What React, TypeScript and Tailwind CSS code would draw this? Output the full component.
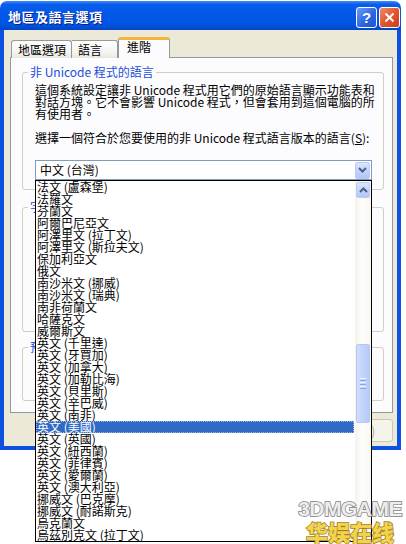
import React from "react";

const items = [
  "法文 (盧森堡)",
  "法羅文",
  "芬蘭文",
  "阿爾巴尼亞文",
  "阿澤里文 (拉丁文)",
  "阿澤里文 (斯拉夫文)",
  "保加利亞文",
  "俄文",
  "南沙米文 (挪威)",
  "南沙米文 (瑞典)",
  "南非荷蘭文",
  "哈薩克文",
  "威爾斯文",
  "英文 (千里達)",
  "英文 (牙買加)",
  "英文 (加拿大)",
  "英文 (加勒比海)",
  "英文 (貝里斯)",
  "英文 (辛巴威)",
  "英文 (南非)",
  "英文 (美國)",
  "英文 (英國)",
  "英文 (紐西蘭)",
  "英文 (菲律賓)",
  "英文 (愛爾蘭)",
  "英文 (澳大利亞)",
  "挪威文 (巴克摩)",
  "挪威文 (耐諾斯克)",
  "烏克蘭文",
  "烏茲別克文 (拉丁文)",
];

function Chevron({ up = false }: { up?: boolean }) {
  return (
    <svg width="9" height="6" viewBox="0 0 9 6">
      <path
        d={up ? "M1 5 L4.5 1.5 L8 5" : "M1 1 L4.5 4.5 L8 1"}
        fill="none"
        stroke="#4D6185"
        strokeWidth="2"
      />
    </svg>
  );
}

export default function App() {
  return (
    <div className="relative w-[406px] h-[544px] bg-white overflow-hidden font-['Noto_Sans_CJK_TC','Noto_Sans_CJK_SC',sans-serif] text-[12px] leading-[12px] text-black">
      <div className="w-[401px] mt-[1px] flex flex-col">
        {/* Title bar */}
        <div className="h-[29px] rounded-t-[7px] bg-[linear-gradient(to_bottom,#3D8BF8_0%,#0A5CEC_12%,#0058E8_45%,#0055E2_80%,#0046C8_100%)] flex items-center pl-[8px] pr-[1px] pt-[3px]">
          <span className="text-white font-bold text-[13px] leading-[14px] [text-shadow:1px_1px_0_#0A1E8C] tracking-[0.5px]">
            地區及語言選項
          </span>
          <div className="ml-auto flex gap-[2px]">
            <div className="w-[21px] h-[21px] rounded-[3px] border border-white bg-[linear-gradient(135deg,#6A9CF8,#2A63E0_60%,#1F55D0)] flex items-center justify-center text-white font-bold text-[15px] leading-[15px] font-['Liberation_Sans',sans-serif]">
              ?
            </div>
            <div className="w-[21px] h-[21px] rounded-[3px] border border-white bg-[linear-gradient(135deg,#F08A6A,#E0522C_55%,#C8401E)] flex items-center justify-center">
              <svg width="11" height="11" viewBox="0 0 11 11">
                <path d="M1.5 1.5 L9.5 9.5 M9.5 1.5 L1.5 9.5" stroke="white" strokeWidth="2" />
              </svg>
            </div>
          </div>
        </div>

        {/* Body */}
        <div className="bg-[#ECE9D8] border-x-[4px] border-b-[4px] border-[#0B52E0] pt-[7px] pb-[4px] flex flex-col">
          {/* Tabs */}
          <div className="h-[21px] flex items-end pl-[7px] mb-[-1px] relative z-10">
            <div className="w-[61px] h-[18px] border border-b-0 border-[#919B9C] rounded-t-[3px] bg-[linear-gradient(to_bottom,#FFFFFF,#F3F3EF_70%,#E9E8E0)] pl-[6px] pt-[3px] whitespace-nowrap">
              地區選項
            </div>
            <div className="w-[46px] h-[18px] border border-b-0 border-l-0 border-[#919B9C] rounded-tr-[3px] bg-[linear-gradient(to_bottom,#FFFFFF,#F3F3EF_70%,#E9E8E0)] pl-[6px] pt-[3px] whitespace-nowrap">
              語言
            </div>
            <div className="w-[52px] h-[21px] border-x border-[#919B9C] border-t-[3px] border-t-[#F5B43C] rounded-t-[3px] bg-[#FCFCFE] pl-[8px] pt-[1px] whitespace-nowrap">
              進階
            </div>
          </div>

          {/* Panel */}
          <div className="ml-[6px] w-[383px] h-[356px] border border-[#919B9C] bg-[#FCFCFE] pl-[11px] pr-[8px] pt-[8px] flex flex-col">
            {/* Groupbox 1 */}
            <fieldset className="border border-[#D0D0BF] rounded-[3px] pl-[12px] pb-[9px]">
              <legend className="ml-[-7px] px-[2px] text-[#1D4ED8] leading-[12px] whitespace-nowrap">
                非 Unicode 程式的語言
              </legend>
              <p className="mt-[6px] whitespace-nowrap leading-[12px]">
                這個系統設定讓非 Unicode 程式用它們的原始語言顯示功能表和
                <br />
                對話方塊。它不會影響 Unicode 程式，但會套用到這個電腦的所
                <br />
                有使用者。
              </p>
              <p className="mt-[12px] whitespace-nowrap leading-[12px]">
                選擇一個符合於您要使用的非 Unicode 程式語言版本的語言(<span className="underline">S</span>):
              </p>
              <div className="relative mt-[16px] w-[337px] h-[20px] border border-[#7F9DB9] bg-white flex items-center">
                <span className="flex-1 pl-[4px] leading-[12px]">中文 (台灣)</span>
                <div className="w-[15px] h-[17px] mr-[1px] rounded-[2px] border border-[#B9CCF5] bg-[linear-gradient(to_bottom,#DCE6FD,#C3D4FB_50%,#B4C8F6)] flex items-center justify-center">
                  <Chevron />
                </div>

                {/* Dropdown list */}
                <div className="absolute left-[-1px] top-[19px] w-[337px] h-[362px] border border-black bg-white flex z-20">
                  <div className="w-[319px] flex flex-col">
                    {items.map((it) =>
                      it === "英文 (美國)" ? (
                        <div
                          key={it}
                          className="h-[12px] bg-[#316AC5] text-white pl-[1px] leading-[12px] whitespace-nowrap outline-1 outline-dotted outline-[#9DB4E0] outline-offset-[-1px] mr-[1px]"
                        >
                          {it}
                        </div>
                      ) : (
                        <div key={it} className="h-[12px] pl-[1px] leading-[12px] whitespace-nowrap">
                          {it}
                        </div>
                      )
                    )}
                  </div>
                  <div className="w-[16px] bg-[linear-gradient(to_right,#F3F2EC,#FEFEFB_40%,#F8F7F2)] flex flex-col px-[1px] pt-[1px]">
                    <div className="h-[16px] rounded-[2px] border border-[#B9CCF5] bg-[linear-gradient(to_bottom,#DCE6FD,#C3D4FB_50%,#B4C8F6)] flex items-center justify-center">
                      <Chevron up />
                    </div>
                    <div className="mt-[146px] h-[79px] rounded-[2px] border border-[#B5C8F4] bg-[linear-gradient(to_right,#D0DDFC,#C3D3FB_50%,#B8CAF7)] flex flex-col items-center justify-center gap-[1px]">
                      <div className="w-[6px] h-[1px] bg-[#EEF3FE]" />
                      <div className="w-[6px] h-[1px] bg-[#8CA8E8]" />
                      <div className="w-[6px] h-[1px] bg-[#EEF3FE]" />
                      <div className="w-[6px] h-[1px] bg-[#8CA8E8]" />
                      <div className="w-[6px] h-[1px] bg-[#EEF3FE]" />
                      <div className="w-[6px] h-[1px] bg-[#8CA8E8]" />
                    </div>
                  </div>
                </div>
              </div>
            </fieldset>

            {/* Groupbox 2 (mostly hidden) */}
            <fieldset className="mt-[11px] border border-[#D0D0BF] rounded-[3px] pl-[12px]">
              <legend className="ml-[-7px] px-[2px] text-[#1D4ED8] leading-[12px] whitespace-nowrap">
                字碼頁轉換表
              </legend>
              <div className="h-[118px]" />
            </fieldset>

            {/* Groupbox 3 (mostly hidden) */}
            <fieldset className="mt-[9px] border border-[#D0D0BF] rounded-[3px] pl-[12px]">
              <legend className="ml-[-7px] px-[2px] text-[#1D4ED8] leading-[12px] whitespace-nowrap">
                預設使用者帳戶設定
              </legend>
              <div className="h-[47px]" />
            </fieldset>
          </div>

          {/* Buttons */}
          <div className="ml-[6px] w-[383px] mt-[6px] flex justify-end gap-[6px]">
            <div className="w-[75px] h-[23px] rounded-[3px] border border-[#003C74] bg-[linear-gradient(to_bottom,#FFFFFF,#F0F0EA_80%,#D6D0C5)] flex items-center justify-center">
              確定
            </div>
            <div className="w-[75px] h-[23px] rounded-[3px] border border-[#003C74] bg-[linear-gradient(to_bottom,#FFFFFF,#F0F0EA_80%,#D6D0C5)] flex items-center justify-center">
              取消
            </div>
            <div className="w-[75px] h-[23px] rounded-[3px] border border-[#C9C7BA] bg-[#F5F4EA] text-[#ACA899] flex items-center justify-center">
              套用(A)
            </div>
          </div>
        </div>
      </div>

      {/* Watermark */}
      <div className="absolute right-[4px] bottom-[2px] z-30 flex flex-col items-center gap-[1px] pointer-events-none">
        <div className="font-['Liberation_Sans',sans-serif] font-bold text-[21px] leading-[20px] tracking-[-0.5px] text-[#EDEDED] [-webkit-text-stroke:1.5px_#808080] [paint-order:stroke_fill]">
          3DMGAME
        </div>
        <div className="font-['Noto_Sans_CJK_SC',sans-serif] font-black text-[22px] leading-[22px] text-[#F3D24E] [-webkit-text-stroke:1.5px_#A07E22] [paint-order:stroke_fill]">
          华娱在线
        </div>
      </div>
    </div>
  );
}
